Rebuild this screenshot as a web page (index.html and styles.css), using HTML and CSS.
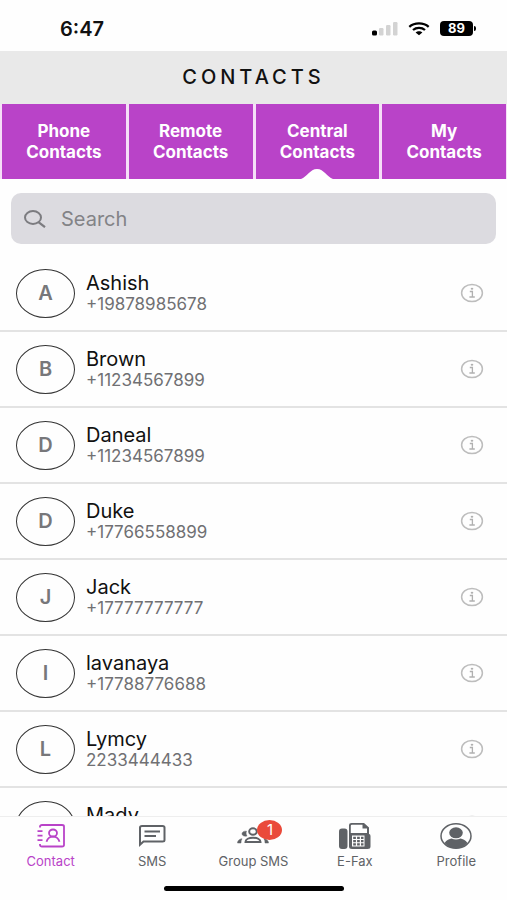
FILE: index.html
```html
<!DOCTYPE html>
<html lang="en">
<head>
    <meta charset="UTF-8">
    <meta name="viewport" content="width=device-width, initial-scale=1.0">
    <title>Contacts</title>
    <link rel="stylesheet" href="styles.css">
</head>
<body>
    <!-- shared icon -->
    <svg class="sprite" aria-hidden="true">
        <symbol id="info" viewBox="0 0 24 20">
            <ellipse cx="12" cy="10" rx="10.4" ry="8.6" fill="none" stroke="#bdbdbd" stroke-width="1.5"/>
            <path d="M9.8 8.5h2.6v5.2M9.4 14h5.4" fill="none" stroke="#b0b0b0" stroke-width="1.3"/>
            <ellipse cx="12" cy="5.7" rx="1.3" ry="1" fill="#b0b0b0"/>
        </symbol>
    </svg>

    <div class="status-bar">
        <span class="time">6:47</span>
        <div class="status-icons">
            <svg width="26" height="14" viewBox="0 0 26 14">
                <rect x="0" y="8.500" width="5" height="5" rx="1.500" fill="#000"/>
                <rect x="7" y="6" width="4.500" height="7.500" rx="1.200" fill="#d3d3d3"/>
                <rect x="14" y="3" width="4.500" height="10.500" rx="1.200" fill="#d3d3d3"/>
                <rect x="21" y="0" width="4.500" height="13.500" rx="1.200" fill="#d3d3d3"/>
            </svg>
            <svg width="22" height="14" viewBox="0 0 22 14">
                <path d="M1.300 4.800C6.500.300 15.500.300 20.700 4.800M5 8c3.300-2.900 8.700-2.900 12 0" fill="none" stroke="#000" stroke-width="2.300"/>
                <path d="M7.600 10.400c1.800-1.700 5-1.700 6.800 0L11 13.300z" fill="#000"/>
            </svg>
            <div class="battery">89</div>
        </div>
    </div>

    <header class="header">
        <h1>CONTACTS</h1>
    </header>

    <nav class="tabs">
        <button type="button">Phone<br>Contacts</button>
        <button type="button">Remote<br>Contacts</button>
        <button type="button" class="active">Central<br>Contacts
            <svg class="notch" width="32" height="11" viewBox="0 0 32 11"><path d="M0 11C6 9 9 1 16 1s10 8 16 10z" fill="#fff"/></svg>
        </button>
        <button type="button">My<br>Contacts</button>
    </nav>

    <div class="search">
        <svg width="22" height="18" viewBox="0 0 22 18">
            <ellipse cx="9" cy="7.500" rx="8" ry="6.500" fill="none" stroke="#7c7c80" stroke-width="2"/>
            <path d="M14.500 12.200l6.500 5" stroke="#7c7c80" stroke-width="2.200"/>
        </svg>
        <input type="text" placeholder="Search" aria-label="Search">
    </div>

    <ul class="contacts">
        <li>
            <span class="avatar">A</span>
            <div class="details"><p class="name">Ashish</p><p class="phone">+19878985678</p></div>
            <button type="button" class="info" aria-label="Info"><svg width="24" height="20"><use href="#info"/></svg></button>
        </li>
        <li>
            <span class="avatar">B</span>
            <div class="details"><p class="name">Brown</p><p class="phone">+11234567899</p></div>
            <button type="button" class="info" aria-label="Info"><svg width="24" height="20"><use href="#info"/></svg></button>
        </li>
        <li>
            <span class="avatar">D</span>
            <div class="details"><p class="name">Daneal</p><p class="phone">+11234567899</p></div>
            <button type="button" class="info" aria-label="Info"><svg width="24" height="20"><use href="#info"/></svg></button>
        </li>
        <li>
            <span class="avatar">D</span>
            <div class="details"><p class="name">Duke</p><p class="phone">+17766558899</p></div>
            <button type="button" class="info" aria-label="Info"><svg width="24" height="20"><use href="#info"/></svg></button>
        </li>
        <li>
            <span class="avatar">J</span>
            <div class="details"><p class="name">Jack</p><p class="phone">+17777777777</p></div>
            <button type="button" class="info" aria-label="Info"><svg width="24" height="20"><use href="#info"/></svg></button>
        </li>
        <li>
            <span class="avatar">I</span>
            <div class="details"><p class="name">lavanaya</p><p class="phone">+17788776688</p></div>
            <button type="button" class="info" aria-label="Info"><svg width="24" height="20"><use href="#info"/></svg></button>
        </li>
        <li>
            <span class="avatar">L</span>
            <div class="details"><p class="name">Lymcy</p><p class="phone">2233444433</p></div>
            <button type="button" class="info" aria-label="Info"><svg width="24" height="20"><use href="#info"/></svg></button>
        </li>
        <li>
            <span class="avatar"></span>
            <div class="details"><p class="name">Mady</p><p class="phone"></p></div>
            <button type="button" class="info" aria-label="Info"><svg width="24" height="20"><use href="#info"/></svg></button>
        </li>
    </ul>

    <footer class="bottom-bar">
        <nav class="menu">
            <a href="#" class="active">
                <svg width="32" height="26" viewBox="0 0 32 26" fill="none" stroke="currentColor" stroke-width="1.800">
                    <path d="M5 4.500V3.500Q5 2 7 2H27Q29 2 29 3.500V22Q29 23.500 27 23.500H7Q5 23.500 5 22V21M2.500 8.200h5M2.500 12.700h5M2.500 17.200h5"/>
                    <ellipse cx="18" cy="10" rx="4" ry="3.500"/>
                    <path d="M11.500 18.800C12.500 15.500 15 13.700 18 13.700s5.500 1.800 6.500 5.100"/>
                </svg>
                <span>Contact</span>
            </a>
            <a href="#">
                <svg width="32" height="26" viewBox="0 0 32 26" fill="none" stroke="currentColor" stroke-width="2">
                    <path d="M4 21.800V4.500Q4 3 6 3H26.500Q28.500 3 28.500 4.500V17Q28.500 18.500 26.500 18.500H7.500z"/>
                    <path d="M8.500 8.500h15.500M8.500 13h11.500"/>
                </svg>
                <span>SMS</span>
            </a>
            <a href="#">
                <span class="icon-wrap">
                    <svg width="32" height="26" viewBox="0 0 32 26" fill="none" stroke="currentColor" stroke-width="2">
                        <ellipse cx="16" cy="8.500" rx="3.800" ry="3.200"/>
                        <path d="M8.500 19C8.500 16.300 12 14.800 16 14.800s7.500 1.500 7.500 4.200z"/>
                        <path d="M.500 20c0-2.300 1.800-4 4.500-4.300-.800 1.200-1.100 2.500-1 4.300zM31.500 20c0-2.300-1.800-4-4.500-4.300.800 1.200 1.100 2.500 1 4.300zM9.500 8.200c-2.700-.400-4.500 1-4.500 2.600s1.900 2.700 5 2.300c-1-1.600-1.200-3.200-.5-4.900z" fill="currentColor" stroke="currentColor" stroke-width=".5"/>
                    </svg>
                    <span class="badge">1</span>
                </span>
                <span>Group SMS</span>
            </a>
            <a href="#">
                <svg width="32" height="26" viewBox="0 0 32 26">
                    <rect x="0" y="5.500" width="8.500" height="20.500" rx="3" fill="currentColor"/>
                    <path d="M10 11V2Q10 0 12.500 0H25l5 4.500V11q1.500 0 1.500 2v10.500Q31.500 26 28.500 26H13q-3 0-3-2.500z" fill="currentColor"/>
                    <path d="M11.800 10V2.800Q11.800 1.800 13 1.800H23.500V5.500H28V10z" fill="#fff"/>
                    <path d="M13 12.500h12.500v11H13z" fill="#fff"/>
                    <path d="M14.200 13.700h2.700v2.300h-2.700zm3.900 0h2.700v2.300h-2.700zm3.900 0h2.500v2.300H22zM14.200 17h2.700v2.200h-2.700zm3.900 0h2.700v2.200h-2.700zM22 17h2.500v2.200H22zM14.200 20.300h2.700v2.200h-2.700zm3.900 0h2.700v2.200h-2.700zm3.900 0h2.500v2.200H22z" fill="currentColor"/>
                </svg>
                <span>E-Fax</span>
            </a>
            <a href="#">
                <svg width="32" height="26" viewBox="0 0 32 26">
                    <ellipse cx="16" cy="13" rx="15" ry="12.200" fill="none" stroke="currentColor" stroke-width="1.500"/>
                    <ellipse cx="16" cy="9.800" rx="6.800" ry="5.500" fill="currentColor"/>
                    <path d="M4.500 20C6.500 17 9.500 16 11.500 15.600q4.500 2 9 0C22.500 16 25.500 17 27.500 20 22 27 10 27 4.500 20z" fill="currentColor"/>
                </svg>
                <span>Profile</span>
            </a>
        </nav>
        <div class="home-indicator"></div>
    </footer>
</body>
</html>
```
FILE: styles.css
```css
* {
    box-sizing: border-box;
}
body {
    display: flex;
    flex-direction: column;
    height: 100vh;
    margin: 0;
    background-color: #fefefe;
    color: #111;
    font-family: Inter, "Liberation Sans", sans-serif;
    overflow: hidden;
}
h1, p, ul {
    margin: 0;
    padding: 0;
}
button {
    border: none;
    padding: 0;
    font-family: inherit;
    cursor: pointer;
}
svg {
    display: block;
    flex: none;
}
.sprite {
    position: absolute;
    width: 0;
    height: 0;
}

/* status bar */
.status-bar {
    display: flex;
    flex: none;
    align-items: center;
    justify-content: space-between;
    height: 51px;
    padding: 6px 34px 0 60px;
}
.time {
    font-size: 20px;
    font-weight: 600;
}
.status-icons {
    display: flex;
    align-items: center;
    gap: 10px;
}
.battery {
    position: relative;
    width: 33px;
    height: 15px;
    border-radius: 4px;
    background-color: #000;
    color: #fff;
    font-size: 13px;
    font-weight: 700;
    line-height: 15px;
    text-align: center;
}
.battery::after {
    content: "";
    position: absolute;
    top: 5px;
    right: -3px;
    width: 2px;
    height: 5px;
    border-radius: 0 2px 2px 0;
    background-color: #000;
}

/* title and tabs */
.header {
    flex: none;
    height: 53px;
    background-color: #e9e9e9;
    text-align: center;
}
.header h1 {
    font-size: 20px;
    font-weight: 500;
    letter-spacing: 4px;
    line-height: 53px;
}
.tabs {
    display: grid;
    flex: none;
    grid-template-columns: repeat(4, 1fr);
    gap: 3px;
    height: 75px;
    padding: 0 1px 0 2px;
    background-color: #f5dff7;
}
.tabs button {
    position: relative;
    background-color: #b943c8;
    color: #fff;
    font-size: 17px;
    font-weight: 700;
    line-height: 21px;
}
.notch {
    position: absolute;
    bottom: 0;
    left: 50%;
    margin-left: -16px;
}

/* search */
.search {
    display: flex;
    flex: none;
    align-items: center;
    gap: 15px;
    height: 51px;
    margin: 14px 11px 12px;
    padding: 0 13px;
    border-radius: 10px;
    background-color: #dcdbe0;
}
.search input {
    flex: 1;
    min-width: 0;
    padding: 0;
    border: none;
    outline: none;
    background: none;
    font-family: inherit;
    font-size: 20px;
}
.search input::placeholder {
    color: #838387;
}

/* contact list */
.contacts {
    flex: 1;
    min-height: 0;
    overflow: hidden;
    list-style: none;
}
.contacts li {
    display: flex;
    align-items: center;
    height: 76px;
    padding: 0 23px 0 16px;
    border-bottom: 2px solid #e3e3e3;
}
.avatar {
    width: 59px;
    height: 49px;
    border: 1px solid #333;
    border-radius: 50%;
    color: #77777a;
    font-size: 20px;
    font-weight: 600;
    line-height: 47px;
    text-align: center;
}
.details {
    flex: 1;
    margin-left: 11px;
    padding-top: 2px;
}
.name {
    font-size: 20px;
    line-height: 21px;
}
.phone {
    min-height: 21px;
    color: #707073;
    font-size: 17px;
    line-height: 21px;
}
.info {
    background: none;
}

/* bottom menu */
.bottom-bar {
    flex: none;
    padding-bottom: 9px;
    border-top: 1px solid #eee;
    background-color: #fefefe;
}
.menu {
    display: grid;
    grid-template-columns: repeat(5, 1fr);
    height: 69px;
    padding-top: 6px;
}
.menu a {
    display: flex;
    flex-direction: column;
    align-items: center;
    gap: 3px;
    color: #5f6266;
    font-size: 13px;
    line-height: 18px;
    text-decoration: none;
}
.menu a.active {
    color: #b943c8;
}
.icon-wrap {
    position: relative;
}
.badge {
    position: absolute;
    top: -3px;
    right: -13px;
    width: 25px;
    height: 20px;
    border-radius: 50%;
    background-color: #ea4a3a;
    color: #fff;
    font-size: 15px;
    line-height: 20px;
    text-align: center;
}
.home-indicator {
    width: 180px;
    height: 5px;
    margin: 0 auto;
    border-radius: 3px;
    background-color: #000;
}
```
